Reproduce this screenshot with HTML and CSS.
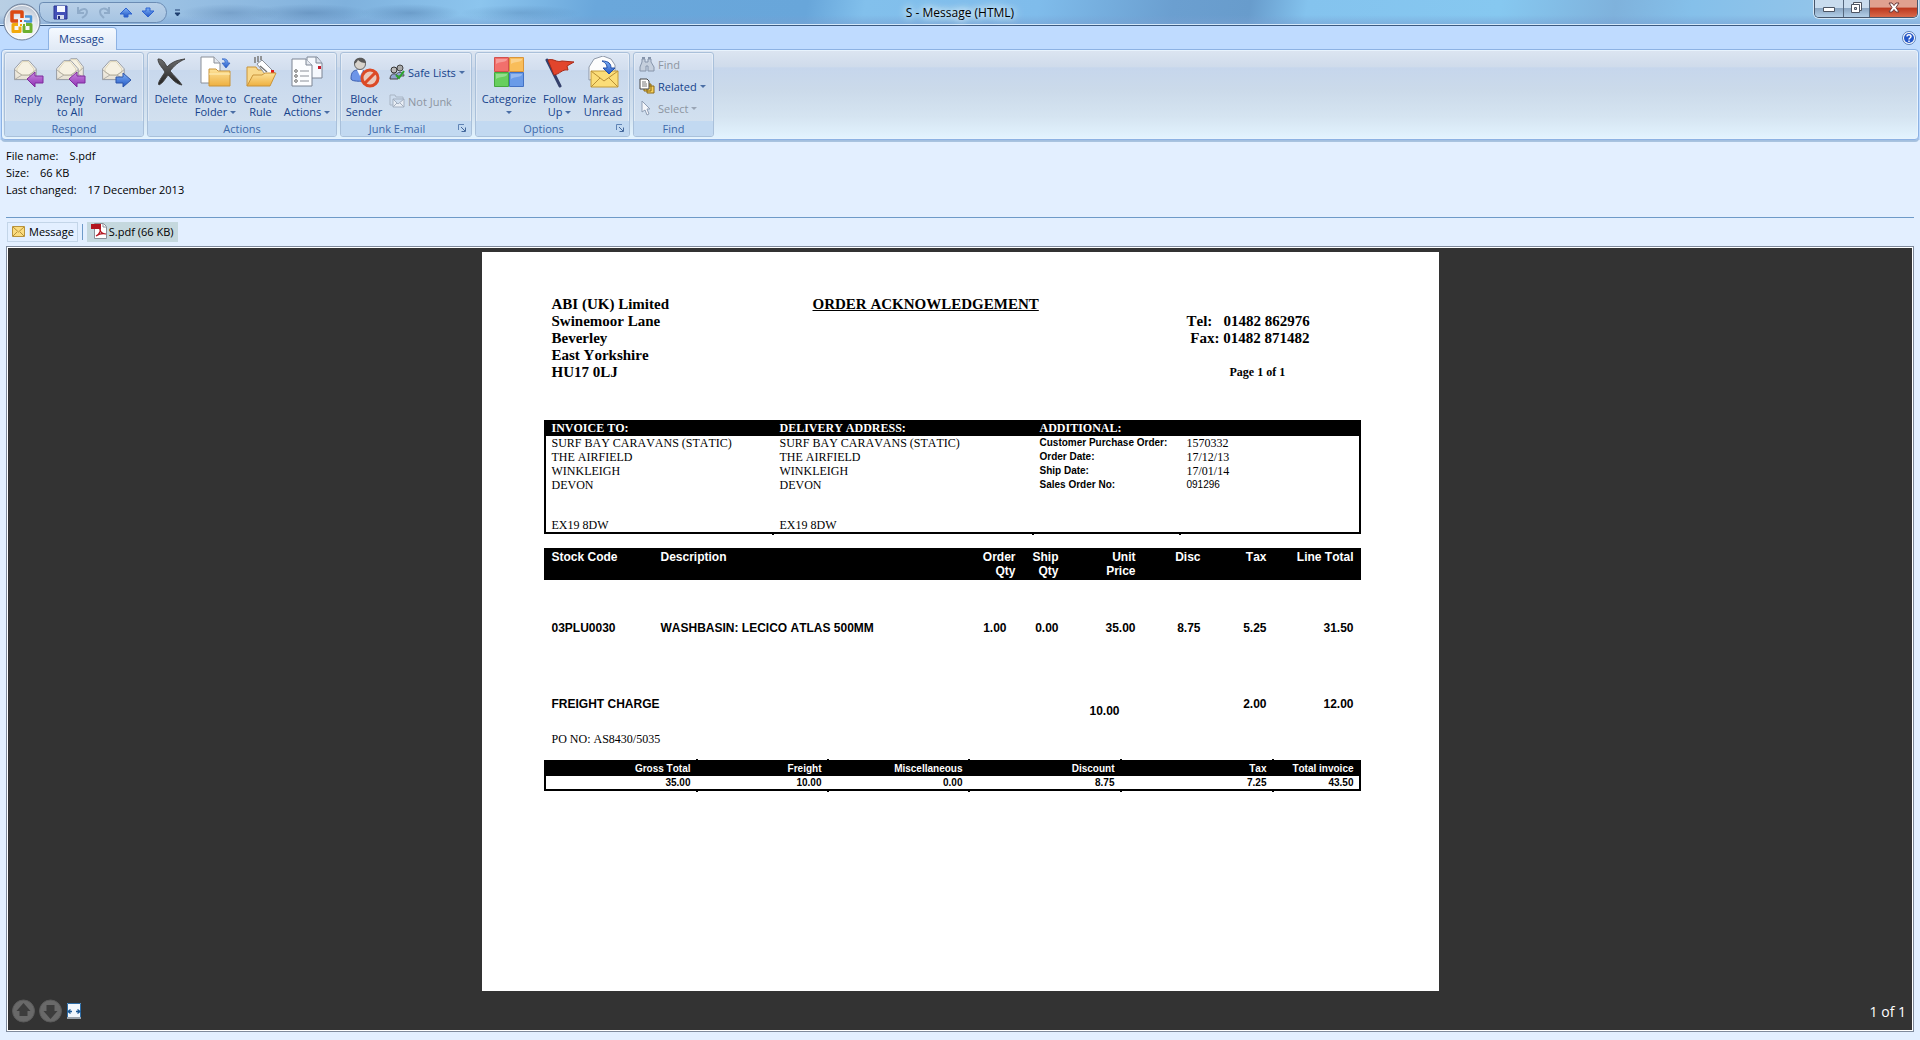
FILE: index.html
```html
<!DOCTYPE html>
<html lang="en">
<head>
<meta charset="utf-8">
<title>S - Message (HTML)</title>
<link rel="stylesheet" href="styles.css">
</head>
<body>
<svg class="defs" aria-hidden="true">
  <defs>
    <linearGradient id="paper" x1="0" y1="0" x2="0" y2="1"><stop offset="0" stop-color="#fffefa"/><stop offset="1" stop-color="#e6e0d2"/></linearGradient>
    <linearGradient id="purple" x1="0" y1="0" x2="0" y2="1"><stop offset="0" stop-color="#c98ae0"/><stop offset="1" stop-color="#8f2fb4"/></linearGradient>
    <linearGradient id="blue" x1="0" y1="0" x2="0" y2="1"><stop offset="0" stop-color="#7db0f8"/><stop offset="1" stop-color="#2458c4"/></linearGradient>
    <linearGradient id="gold" x1="0" y1="0" x2="0" y2="1"><stop offset="0" stop-color="#fde29a"/><stop offset="1" stop-color="#eeb040"/></linearGradient>
    <linearGradient id="black" x1="0" y1="0" x2="0" y2="1"><stop offset="0" stop-color="#6c6c6c"/><stop offset="1" stop-color="#222"/></linearGradient>
    <radialGradient id="orb" cx=".5" cy=".75" r=".8"><stop offset="0" stop-color="#fff"/><stop offset=".5" stop-color="#e9ecf1"/><stop offset="1" stop-color="#a9b6c8"/></radialGradient>
    <g id="envelope">
      <path d="M2 12 11 3h9l9 9v12H2z" fill="url(#paper)" stroke="#8b8f96"/>
      <path d="M5 12 12 4h7l7 8v4l-7 3h-7l-7-3z" fill="#f6f1e2" stroke="#d9cfae"/>
      <path d="M2 13l9 6h9l9-6M2 24l9-5M29 24l-9-5" fill="none" stroke="#a9a79f"/>
    </g>
    <path id="arrow-left" d="M15 23l8-7v4h8v7h-8v4z" fill="url(#purple)" stroke="#7d2b9c"/>
  </defs>
</svg>

<header class="window">
  <div class="titlebar">
    <div class="quick">
      <button class="qbtn" aria-label="Save"><svg width="15" height="15" viewBox="0 0 15 15"><path d="M1 1h13v13H1z" fill="#4350b8" stroke="#2b3590"/><path d="M4 1h8v6H4z" fill="#f4f7ff"/><path d="M4 10h7v4H4z" fill="#d4dbee"/><path d="M5 11h2v3H5z" fill="#222b78"/></svg></button>
      <button class="qbtn" aria-label="Undo"><svg width="15" height="15" viewBox="0 0 15 15"><path d="M3 2v6h6M3 8c2-4 9-6 9-1 0 3-2 4-5 6" fill="none" stroke="#8fabc9" stroke-width="2"/></svg></button>
      <button class="qbtn" aria-label="Redo"><svg width="15" height="15" viewBox="0 0 15 15"><path d="M12 2v6H7M12 7C9 2 3 3 3 7c0 3 2 4 4 6" fill="none" stroke="#8fabc9" stroke-width="2"/></svg></button>
      <button class="qbtn" aria-label="Previous item"><svg width="15" height="15" viewBox="0 0 15 15"><path d="M7 3l6 6H9v3H5V9H1z" fill="url(#blue)" stroke="#2d62cf"/></svg></button>
      <button class="qbtn" aria-label="Next item"><svg width="15" height="15" viewBox="0 0 15 15"><path d="M7 12l6-6H9V3H5v3H1z" fill="url(#blue)" stroke="#2d62cf"/></svg></button>
    </div>
    <button class="customize" aria-label="Customize toolbar"><svg width="7" height="8" viewBox="0 0 7 8"><path d="M1 1h5M1 4h5L3.500 7z" fill="#1e3f70" stroke="#1e3f70"/></svg></button>
    <h1 class="caption">S - Message (HTML)</h1>
    <div class="winbtns">
      <button class="min" aria-label="Minimize"><svg width="12" height="6"><path d="M.5.5h11v4H.5z" fill="#fff" stroke="#4d5563"/></svg></button>
      <button class="max" aria-label="Restore"><svg width="13" height="13"><path d="M3.500 1.500h8v8h-8z" fill="#fff" stroke="#4d5563"/><path d="M1.500 3.500h8v8h-8z" fill="#fff" stroke="#4d5563"/><path d="M4.500 6.500h2v2h-2z" fill="#c9d3df" stroke="#4d5563"/></svg></button>
      <button class="close" aria-label="Close"><svg width="12" height="11" viewBox="0 0 12 11"><path d="M1 1h3l2 2.500L8 1h3L8 5.500 11 10H8L6 7.500 4 10H1l3-4.500z" fill="#fff" stroke="#6b3a3a"/></svg></button>
    </div>
  </div>
  <button class="orb" aria-label="Office Button">
    <svg width="38" height="38" viewBox="0 0 38 38"><circle cx="19" cy="19" r="18" fill="url(#orb)" stroke="#6f8099"/><circle cx="19" cy="19" r="16.500" fill="none" stroke="#fff" opacity=".8"/>
      <g fill="none" stroke-linejoin="round"><path d="M15 18H9V9h10v6" stroke="#dc4a12" stroke-width="3.500"/><path d="M22 13.500h6v5h-5" stroke="#4a93d6" stroke-width="2.500"/><path d="M15 21.500h-5v7h7v-5" stroke="#f2a90c" stroke-width="3"/><path d="M21 23v5.500h7v-7h-5" stroke="#6cb02e" stroke-width="3"/></g>
      <path d="M17 17h2v2h-2z" fill="#d9420f"/><path d="M21 17h2v2h-2z" fill="#4a93d6"/><path d="M17 21h2v2h-2z" fill="#f2a90c"/><path d="M20 21h2v2h-2z" fill="#6cb02e"/></svg>
  </button>
  <div class="tabstrip">
    <button class="tab">Message</button>
    <button class="help" aria-label="Help"><svg width="14" height="14" viewBox="0 0 14 14"><circle cx="7" cy="7" r="6.500" fill="#fff" stroke="#5a7fb8"/><circle cx="7" cy="7" r="5" fill="#2456c8"/><path d="M5 5.500c0-2.500 4-2.500 4 0C9 7 7 7 7 8.500M7 9.500V11" fill="none" stroke="#fff" stroke-width="1.500"/></svg></button>
  </div>
  <div class="ribbon">
    <section class="group">
      <div class="tools respond">
        <button class="big"><svg viewBox="0 0 32 32"><use href="#envelope" transform="translate(1 2) scale(.8 .9)"/><use href="#arrow-left"/></svg><span>Reply</span></button>
        <button class="big"><svg viewBox="0 0 32 32"><use href="#envelope" transform="translate(9 0) scale(.7 .9)"/><use href="#envelope" transform="translate(1 2) scale(.8 .9)"/><use href="#arrow-left"/></svg><span>Reply<br>to All</span></button>
        <button class="big"><svg viewBox="0 0 32 32"><use href="#envelope" transform="translate(1 2) scale(.8 .9)"/><path d="M31 24l-8-7v4h-7v6h7v4z" fill="url(#blue)" stroke="#2d55a8"/></svg><span>Forward</span></button>
      </div>
      <h2>Respond</h2>
    </section>
    <section class="group">
      <div class="tools actions">
        <button class="big"><svg viewBox="0 0 32 32"><path d="M3 3c4 0 6 2 9 8 5-5 10-7 18-8-7 3-11 7-15 12 4 5 8 8 12 14-6-1-10-6-14-10-3 4-5 8-9 10-2-2 3-8 6-13C7 11 3 8 3 3z" fill="url(#black)" stroke="#444"/></svg><span>Delete</span></button>
        <button class="big"><svg viewBox="0 0 32 32"><path d="M1 1h13l6 6v20H1z" fill="#fff" stroke="#8a8f98"/><path d="M14 1v6h6" fill="#e4e8ef" stroke="#8a8f98"/><path d="M9 13h7l2 2h12v15H9z" fill="url(#gold)" stroke="#c8933a"/><path d="M9 18h21" stroke="#fff0bd"/><path d="M22 3c5-1 6 2 6 4h2l-4 5-4-5h3c0-2 0-3-3-4z" fill="url(#blue)" stroke="#2f5fc0" stroke-width=".7"/></svg><span>Move to<br>Folder <i class="dd"></i></span></button>
        <button class="big"><svg viewBox="0 0 32 32"><path d="M2 30V11h9l2 3h13v6" fill="#f9d98c" stroke="#c8933a"/><path d="M12 8l5-4 13 13-6 6z" fill="#fff" stroke="#8a8f98"/><path d="M10 1v6M13 0v6M16 0v4M15 10l7 6" stroke="#777" stroke-width="1.500"/><path d="M26 14h3v3h-3z" fill="#e01818"/><path d="M2 30l6-11h9l3-2h11l-6 13z" fill="url(#gold)" stroke="#c8933a"/></svg><span>Create<br>Rule</span></button>
        <button class="big"><svg viewBox="0 0 32 32"><path d="M16 1h10l5 6v15H16z" fill="#f5f8fd" stroke="#7c8594"/><path d="M25 1v6h6" fill="#dbe2ec" stroke="#7c8594"/><path d="M27 10h3v3h-3z" fill="#c41a2a"/><path d="M1 3h14l6 6v21H1z" fill="#fcfdff" stroke="#7c8594"/><path d="M15 3v6h6" fill="#e4e8ef" stroke="#7c8594"/><path d="M9 15h9M9 20h9M9 25h9" stroke="#8a8f98"/><g fill="#fff" stroke="#666"><circle cx="5" cy="15" r="1.300"/><circle cx="5" cy="20" r="1.300"/><circle cx="5" cy="25" r="1.300"/></g></svg><span>Other<br>Actions <i class="dd"></i></span></button>
      </div>
      <h2>Actions</h2>
    </section>
    <section class="group">
      <div class="tools junk">
        <button class="big"><svg viewBox="0 0 32 32"><path d="M3 23c0-8 3-9 8-9s9 2 9 9c0 3-17 3-17 0z" fill="#6d95e8" stroke="#3d5fb0"/><path d="M9 14l3 6 3-6z" fill="#fff"/><circle cx="12" cy="8" r="5.500" fill="#d8d3cc" stroke="#666"/><path d="M6 8c0-8 12-8 12-1-4 0-6-1-8-3-1 2-2 3-4 4z" fill="#595959"/><circle cx="22" cy="22" r="8" fill="#e9c9bd" stroke="#dc4a26" stroke-width="3"/><path d="M17 27l10-10" stroke="#dc4a26" stroke-width="3"/></svg><span>Block<br>Sender</span></button>
        <div class="stack">
          <button class="small"><svg viewBox="0 0 16 16"><circle cx="11" cy="4" r="3" fill="#aaa" stroke="#444"/><path d="M7 12c0-5 8-5 8 0z" fill="#8aa6d8" stroke="#555"/><circle cx="5" cy="6" r="3" fill="#bbb" stroke="#333"/><path d="M1 15c0-7 8-7 8 0z" fill="#8fa3d0" stroke="#444"/><path d="M7 11l3 3 5-7" fill="none" stroke="#2aa52a" stroke-width="2"/></svg>Safe Lists <i class="dd"></i></button>
          <button class="small" disabled><svg viewBox="0 0 16 16"><path d="M1 12V2h5l1 2h7v2M1 12h3" fill="none" stroke="#a9b5c4"/><path d="M4 6h11v8H4zM4 6l5 5 6-5M4 14l4-4M15 14l-4-4" fill="#e9eef5" stroke="#a3afbf"/></svg>Not Junk</button>
        </div>
      </div>
      <h2>Junk E-mail</h2>
      <button class="launch" aria-label="Junk e-mail options"><svg width="8" height="8"><path d="M.5 6V.5H6" fill="none" stroke="#5f83b4"/><path d="M3 3l4 4M7.500 3.500v4h-4" fill="none" stroke="#44689c"/></svg></button>
    </section>
    <section class="group">
      <div class="tools options">
        <button class="big"><svg viewBox="0 0 32 32"><path d="M1.500 1.500h14v14h-14z" fill="#f2706c" stroke="#d2504c"/><path d="M16.500 1.500h14v14h-14z" fill="#f9bd5a" stroke="#d9953a"/><path d="M1.500 16.500h14v14h-14z" fill="#67cf5e" stroke="#45a840"/><path d="M16.500 16.500h14v14h-14z" fill="#6a9be8" stroke="#4472c4"/><path d="M3 8c5-3 8-1 11-4V3H3zM18 8c5-3 8-1 11-4V3H18zM3 23c5-3 8-1 11-4v-1H3zM18 23c5-3 8-1 11-4v-1H18z" fill="#fff" opacity=".3"/></svg><span>Categorize<br><i class="dd"></i></span></button>
        <button class="big"><svg viewBox="0 0 32 32"><path d="M3 4l13 26" stroke="#34406c" stroke-width="3" stroke-linecap="round"/><path d="M4 4c6-2 8 3 14 1l12 1-7 4 1 4c-6-1-8 4-14 5z" fill="#e2452c" stroke="#a92a18"/></svg><span>Follow<br>Up <i class="dd"></i></span></button>
        <button class="big"><svg viewBox="0 0 32 32"><path d="M2 24V11l5-8 9-3 8 3 4 6v10z" fill="#fdfdfd" stroke="#8f99a8"/><path d="M4 15h27v16H4z" fill="#fbdd78" stroke="#c29a3a"/><path d="M4 15l13 10 14-10M4 31l9-9M31 31l-9-9" fill="none" stroke="#b98f36"/><path d="M15 5c7 0 9 3 9 7h4l-6 6-6-6h4c0-3-1-5-5-7z" fill="url(#blue)" stroke="#2450a8"/></svg><span>Mark as<br>Unread</span></button>
      </div>
      <h2>Options</h2>
      <button class="launch" aria-label="Message options"><svg width="8" height="8"><path d="M.5 6V.5H6" fill="none" stroke="#5f83b4"/><path d="M3 3l4 4M7.500 3.500v4h-4" fill="none" stroke="#44689c"/></svg></button>
    </section>
    <section class="group">
      <div class="tools find">
        <button class="small" disabled><svg viewBox="0 0 16 16"><path d="M3 3h3v3h3V3h3v3l3 5v4H9v-5H7v5H1v-4l2-5z" fill="#c5cfdd" stroke="#8694aa"/><path d="M3 1h3v2H3zM9 1h3v2H9z" fill="#8694aa"/></svg>Find</button>
        <button class="small"><svg viewBox="0 0 16 16"><path d="M8 8h7v7H8zM5 6h7v7H5z" fill="#f7d05c" stroke="#8b6914"/><path d="M1 1h7l2 2v8H1z" fill="#fff" stroke="#444"/><path d="M3 4h4M3 6h5M3 8h5" stroke="#777"/></svg>Related <i class="dd"></i></button>
        <button class="small" disabled><svg viewBox="0 0 16 16"><path d="M3 1l8 8H8l2 5-2 1-2-5-3 2z" fill="#f4f6fa" stroke="#8e9db3"/></svg>Select <i class="dd"></i></button>
      </div>
      <h2>Find</h2>
    </section>
  </div>
</header>

<main class="content">
  <dl class="fileinfo">
    <div><dt>File name:</dt><dd>S.pdf</dd></div>
    <div><dt>Size:</dt><dd>66 KB</dd></div>
    <div><dt>Last changed:</dt><dd>17 December 2013</dd></div>
  </dl>
  <nav class="parts">
    <button class="part"><svg width="13" height="11" viewBox="0 0 13 11"><path d="M.5.5h12v10H.5z" fill="#fbdc7e" stroke="#b8923a"/><path d="M1 1l5.500 5L12 1M1 10l4-4M12 10L8 6" fill="none" stroke="#b8923a"/></svg>Message</button>
    <span class="sep"></span>
    <button class="part selected"><svg width="16" height="16" viewBox="0 0 16 16"><path d="M3.500.5h9l3 3v12h-12z" fill="#fff" stroke="#8a8f98"/><path d="M12 1v3h3" fill="none" stroke="#8a8f98"/><path d="M0 1h10v5H0z" fill="#b3151f"/><path d="M5 13c4-2 5-6 4-8-1 4 3 6 6 6-4-1-7 0-10 2z" fill="none" stroke="#b3151f" stroke-width="1.200"/></svg>S.pdf (66 KB)</button>
  </nav>

  <section class="viewer">
    <article class="sheet">
      <div class="head">
        <address>ABI (UK) Limited<br>Swinemoor Lane<br>Beverley<br>East Yorkshire<br>HU17 0LJ</address>
        <h2>ORDER ACKNOWLEDGEMENT</h2>
        <div class="contact"><p>Tel: &nbsp; 01482 862976</p><p>&nbsp;Fax: 01482 871482</p><p class="pageno">Page 1 of 1</p></div>
      </div>

      <table class="parties">
        <colgroup><col class="c-inv"><col class="c-del"><col class="c-lab"><col></colgroup>
        <thead><tr><th>INVOICE TO:</th><th>DELIVERY ADDRESS:</th><th colspan="2">ADDITIONAL:</th></tr></thead>
        <tbody>
          <tr><td>SURF BAY CARAVANS (STATIC)</td><td>SURF BAY CARAVANS (STATIC)</td><th>Customer Purchase Order:</th><td>1570332</td></tr>
          <tr><td>THE AIRFIELD</td><td>THE AIRFIELD</td><th>Order Date:</th><td>17/12/13</td></tr>
          <tr><td>WINKLEIGH</td><td>WINKLEIGH</td><th>Ship Date:</th><td>17/01/14</td></tr>
          <tr><td>DEVON</td><td>DEVON</td><th>Sales Order No:</th><td class="narrow">091296</td></tr>
          <tr class="last"><td>EX19 8DW</td><td>EX19 8DW</td><td></td><td></td></tr>
        </tbody>
      </table>

      <table class="lines">
        <colgroup><col class="c-code"><col><col class="c-ship"><col class="c-unit"><col class="c-disc"><col class="c-tax"><col class="c-total"></colgroup>
        <thead><tr><th class="l">Stock Code</th><th><div class="pair"><span>Description</span><span class="r">Order<br>Qty</span></div></th><th>Ship<br>Qty</th><th>Unit<br>Price</th><th>Disc</th><th>Tax</th><th>Line Total</th></tr></thead>
        <tbody>
          <tr class="item"><td class="l">03PLU0030</td><td><div class="pair"><span>WASHBASIN: LECICO ATLAS 500MM</span><span class="qty">1.00</span></div></td><td>0.00</td><td>35.00</td><td>8.75</td><td>5.25</td><td>31.50</td></tr>
          <tr class="freight"><td class="l" colspan="2">FREIGHT CHARGE</td><td></td><td class="amount">10.00</td><td></td><td>2.00</td><td>12.00</td></tr>
          <tr class="po"><td class="l" colspan="7">PO NO: AS8430/5035</td></tr>
        </tbody>
      </table>

      <table class="totals">
        <colgroup><col class="t-wide"><col class="t-freight"><col class="t-misc"><col class="t-wide"><col class="t-wide"><col></colgroup>
        <thead><tr><th>Gross Total</th><th>Freight</th><th>Miscellaneous</th><th>Discount</th><th>Tax</th><th>Total invoice</th></tr></thead>
        <tbody><tr><td>35.00</td><td>10.00</td><td>0.00</td><td>8.75</td><td>7.25</td><td>43.50</td></tr></tbody>
      </table>
    </article>
    <footer class="status">
      <button aria-label="Previous page"><svg width="23" height="24" viewBox="0 0 23 24"><circle cx="11.500" cy="12" r="11" fill="#696969" stroke="#5a5a5a"/><path d="M11.500 4l7 8h-3v5h-8v-5h-3z" fill="#3c3c3c"/></svg></button>
      <button aria-label="Next page"><svg width="23" height="24" viewBox="0 0 23 24"><circle cx="11.500" cy="12" r="11" fill="#696969" stroke="#5a5a5a"/><path d="M11.500 20l7-8h-3V6h-8v6h-3z" fill="#3c3c3c"/></svg></button>
      <button aria-label="Fit width"><svg width="14" height="16" viewBox="0 0 14 16"><path d="M0 0h14v16H0z" fill="#f2f7fc"/><path d="M0 14h14v2H0z" fill="#9aa3ac"/><path d="M.5 14V.5h13V14" fill="none" stroke="#2e6ea8"/><path d="M1 8.500h4M3.500 6.500L1 8.500l2.500 2M13 8.500H9M10.500 6.500l2.500 2-2.500 2" fill="none" stroke="#1d5a96" stroke-width="1.300"/></svg></button>
      <span class="count">1 of 1</span>
    </footer>
  </section>
</main>
</body>
</html>
```
FILE: styles.css
```css
* { box-sizing: border-box; }
body {
  margin: 0;
  min-height: 100vh;
  display: flex;
  flex-direction: column;
  background: #e3efff;
  font: 11px/13px "Open Sans", "Noto Sans", sans-serif;
  color: #000;
}
button { font: inherit; color: inherit; background: none; border: 0; padding: 0; }
h1, h2, p, dl, dd { margin: 0; }
svg { display: block; flex: none; }
.defs { position: absolute; width: 0; height: 0; }

/* title bar */
.window { position: relative; background: #bfdbff; }
.titlebar {
  display: grid;
  grid-template-columns: 1fr auto 1fr;
  height: 26px;
  border-bottom: 1px solid #3c5a80;
  box-shadow: inset 0 -1px #d5e9fb;
  position: relative;
  background:
    radial-gradient(ellipse 50px 9px at 230px 13px, rgba(60, 100, 150, .3), transparent),
    radial-gradient(ellipse 60px 9px at 310px 13px, rgba(60, 100, 150, .35), transparent),
    radial-gradient(ellipse 50px 9px at 410px 13px, rgba(60, 100, 150, .35), transparent),
    radial-gradient(ellipse 60px 8px at 520px 13px, rgba(60, 100, 150, .25), transparent),
    linear-gradient(to bottom, transparent 60%, rgba(120, 160, 210, .6)),
    linear-gradient(100deg, #b9cfe4 0, #9dc2e4 8%, #7fb1dd 18%, #8cc5ee 25%, #6aa7db 31%, #68a6da 42%, #82c0ec 45%, #7fbceb 54%, #6b9fd0 61%, #689ccc 65%, #84c3ee 68%, #86c8f0 78%, #7fb2dc 84%, #85c0ea 88%, #9cc8ea 100%);
}
.quick {
  grid-column: 1;
  justify-self: start;
  display: flex;
  align-items: center;
  gap: 7px;
  width: 128px;
  height: 21px;
  margin: 2px 0 0 39px;
  padding-left: 13px;
  border: 1px solid #6b8cb4;
  border-radius: 4px 11px 11px 12px;
  background: linear-gradient(#b9d0e8, #a6c4e2);
}
.customize { position: absolute; left: 174px; top: 9px; }
.caption {
  grid-column: 2;
  font-size: 12px;
  line-height: 26px;
  font-weight: 400;
  text-shadow: 0 0 6px #fff, 0 0 10px #e0f2ff, 0 0 12px #e0f2ff;
}
.winbtns {
  justify-self: end;
  display: flex;
  height: 18px;
  margin-right: 2px;
  border: 1px solid #47566b;
  border-top: 0;
  border-radius: 0 0 5px 5px;
  box-shadow: 0 0 0 1px #d5e7f7;
  overflow: hidden;
}
.winbtns button { display: grid; place-items: center; }
.min { width: 28px; background: linear-gradient(#c9dcee 45%, #8ba6c2 50%, #b3cfe8); }
.max { width: 26px; border-left: 1px solid #56687e; background: linear-gradient(#c9dcee 45%, #8ba6c2 50%, #b3cfe8); }
.winbtns .min, .winbtns .max { padding-bottom: 2px; }
.winbtns .min { padding-top: 4px; }
.winbtns .close { width: 48px; padding-bottom: 2px; border-left: 1px solid #56687e; background: linear-gradient(#e0a08f 40%, #bd3a20 50%, #d9694a); }
.orb { position: absolute; left: 3px; top: 3px; }

/* ribbon */
.tabstrip { display: flex; justify-content: space-between; height: 23px; padding: 1px 4px 0 48px; }
.tab {
  width: 69px;
  height: 23px;
  margin-bottom: -1px;
  padding-right: 2px;
  padding-bottom: 2px;
  position: relative;
  z-index: 1;
  border: 1px solid #8db2e3;
  border-bottom: 0;
  border-radius: 4px 4px 0 0;
  background: linear-gradient(#f4f9ff, #e0e9f5);
  color: #15428b;
}
.help { align-self: center; }
.ribbon {
  display: flex;
  gap: 3px;
  margin: 0 1px;
  padding: 2px 1px 2px 2px;
  border: 1px solid #8db2e3;
  border-radius: 4px;
  box-shadow: inset 0 0 0 1px #e8f3fd, 0 1px #a3bfdf, 0 2px #a9c3df;
  background: linear-gradient(#dce5f1, #cfdbeb 19%, #c6d6ec 20%, #cbdaea 45%, #d5e4f1 75%, #e3f4ff);
}
.group {
  position: relative;
  border: 1px solid #a9c0da;
  border-radius: 3px;
  box-shadow: inset 0 0 0 1px rgba(255, 255, 255, .35);
  background: linear-gradient(#dee7f4, #d2deee 20%, #c8d8ed 21%, #d3e1ef 90%);
  overflow: hidden;
  color: #15428b;
}
.group h2 {
  font-size: 11px;
  font-weight: 400;
  line-height: 15px;
  text-align: center;
  color: #3e6aaa;
  background: #c2d9f1;
}
.tools { display: grid; height: 68px; padding-top: 3px; }
.respond { grid-template-columns: 46px 38px 54px; }
.actions { grid-template-columns: 46px 43px 47px 52px; }
.junk { grid-template-columns: 46px 84px; }
.junk + h2 { padding-right: 16px; }
.junk + h2, .options + h2 { padding-right: 18px; }
.options { grid-template-columns: 66px 35px 52px; }
.tools.find { width: 79px; align-content: start; padding: 0 0 0 5px; }
.actions .big:last-child { padding-right: 6px; }
.big {
  display: flex;
  flex-direction: column;
  align-items: center;
  gap: 4px;
  white-space: nowrap;
}
.big svg { width: 32px; height: 32px; }
.big span { display: block; }
.small { display: flex; align-items: center; gap: 3px; height: 22px; white-space: nowrap; }
.small svg { width: 16px; height: 16px; }
.small:disabled { color: #8d95a1; }
.stack { display: grid; align-content: start; gap: 7px; padding-top: 5px; padding-left: 2px; }
.dd {
  display: inline-block;
  vertical-align: 2px;
  border: 3px solid transparent;
  border-top-color: #4a6ea5;
  border-bottom: 0;
}
.small:disabled .dd { border-top-color: #9aa5b5; }
.launch { position: absolute; right: 5px; bottom: 4px; }

/* attachment details */
.content { flex: 1; display: flex; flex-direction: column; padding: 7px 6px 8px; }
.fileinfo { padding-bottom: 19px; border-bottom: 1px solid #6e9ac8; line-height: 17px; }
.fileinfo div { display: flex; gap: 11px; }
.parts { display: flex; align-items: center; padding: 4px 1px; gap: 4px; }
.part {
  display: flex;
  align-items: center;
  gap: 4px;
  height: 20px;
  padding: 0 3px 2px 4px;
  border: 1px solid #c3d5e8;
}
.part.selected { gap: 2px; background: #c5d8de; border-color: #c5d8de; padding: 0 3px 2px; }
.sep { width: 1px; height: 16px; background: #6e9ac8; }

/* preview */
.viewer {
  flex: 1;
  display: flex;
  flex-direction: column;
  padding: 5px 5px 0;
  border: 1px solid #7f8a9c;
  outline: 1px solid #fff;
  outline-offset: -2px;
  background: #333;
}
.sheet {
  flex: 1;
  align-self: center;
  width: 957px;
  max-width: 100%;
  padding: 44px 78px 0 62px;
  background: #fff;
  font: 12px/14px "Liberation Serif", serif;
  font-kerning: none;
}
.head {
  display: grid;
  grid-template-columns: 261px 1fr 174px;
  padding-left: 8px;
  margin-bottom: 39px;
  font-size: 15px;
  line-height: 17px;
  font-weight: 700;
}
.head address { font-style: normal; }
.head h2 { font-size: 15px; line-height: 17px; text-decoration: underline; }
.contact { padding-top: 17px; }
.pageno { padding: 17px 0 0 43px; font-size: 12px; }
table { width: 100%; table-layout: fixed; border-spacing: 0; }
th, td { padding: 0; text-align: left; vertical-align: top; white-space: nowrap; position: relative; }
thead th { background: #000; color: #fff; }

.parties { border: 2px solid #000; border-top: 0; }
.parties th, .parties td { padding-left: 6px; }
.parties thead th { line-height: 16px; }
.c-inv { width: 228px; }
.c-del { width: 260px; }
.c-lab { width: 147px; }
.parties tbody th, .parties .narrow, .totals { font-family: "Liberation Sans", sans-serif; font-size: 10px; }
.parties .last td { padding-top: 26px; }
.parties .last td + td::after, .totals th + th::before, .totals td + td::after {
  content: "";
  position: absolute;
  left: -2px;
  bottom: -3px;
  width: 2px;
  height: 3px;
  background: #000;
}
.totals th + th::before { bottom: auto; top: -1px; }

.lines { margin-top: 14px; font-family: "Liberation Sans", sans-serif; font-weight: 700; }
.lines th, .lines td { text-align: right; padding: 0 7px; }
.lines thead th { padding: 2px 7px; }
.lines thead .l, .lines .l { text-align: left; padding-left: 8px; }
.pair { display: flex; justify-content: space-between; }
.qty { padding-right: 9px; }
.c-code { width: 110px; }
.c-ship { width: 43px; }
.c-unit { width: 77px; }
.c-disc { width: 65px; }
.c-tax { width: 66px; }
.c-total { width: 87px; }
.lines .item td { padding-top: 41px; }
.lines .freight td { padding-top: 62px; }
.lines .freight .amount { padding-top: 69px; padding-right: 23px; }
.lines .po td { padding-top: 14px; font-family: "Liberation Serif", serif; font-weight: 400; }

.totals { margin-top: 14px; border: 2px solid #000; border-top: 0; font-weight: 700; }
.totals th, .totals td { text-align: right; padding-right: 7px; line-height: 13px; }
.totals th { padding-top: 2px; line-height: 14px; }
.totals th:last-child, .totals td:last-child { padding-right: 5px; }
.t-wide { width: 152px; }
.t-freight { width: 131px; }
.t-misc { width: 141px; }

.status { display: flex; align-items: center; gap: 4px; height: 40px; color: #fff; }
.status button:last-of-type { margin-left: 1px; }
.count { margin-left: auto; margin-right: 2px; font-size: 14px; }
```
